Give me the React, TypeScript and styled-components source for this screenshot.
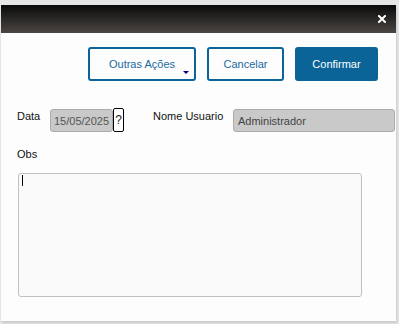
import React from "react";
import styled, { createGlobalStyle } from "styled-components";

const Global = createGlobalStyle`
  html, body { margin: 0; padding: 0; }
  body {
    background: #e6e6e6;
    font-family: "Liberation Sans", Arial, sans-serif;
    font-size: 11px;
    width: 399px;
    height: 324px;
    overflow: hidden;
  }
`;

const Page = styled.div`
  padding: 5px 3px 0 1px;
`;

const Dialog = styled.div`
  width: 395px;
  height: 316px;
  background: #fdfdfd;
  display: flex;
  flex-direction: column;
  box-shadow: 1px 2px 2px rgba(0, 0, 0, 0.12);
  overflow: hidden;
`;

const Header = styled.div`
  height: 28px;
  background: linear-gradient(#0a0a0a, #4b4643);
  display: flex;
  align-items: center;
  justify-content: flex-end;
  padding-right: 9px;
`;

const Close = styled.button`
  border: 0;
  background: transparent;
  padding: 0;
  width: 10px;
  height: 10px;
  display: flex;
  align-items: center;
  justify-content: center;
  cursor: pointer;
`;

const Body = styled.div`
  padding: 14px 0 0 16px;
  display: flex;
  flex-direction: column;
`;

const Toolbar = styled.div`
  display: flex;
  justify-content: flex-end;
  gap: 11px;
  padding-right: 18px;
`;

const Button = styled.button<{ $primary?: boolean; $w: number }>`
  position: relative;
  width: ${(p) => p.$w}px;
  height: 34px;
  box-sizing: border-box;
  border: 2px solid #0b6497;
  border-radius: 3px;
  background: ${(p) => (p.$primary ? "#0b6497" : "#fdfdfd")};
  color: ${(p) => (p.$primary ? "#ffffff" : "#1a6aa0")};
  font-family: "Liberation Sans", Arial, sans-serif;
  font-size: 11px;
  padding: 0;
  cursor: pointer;
`;

const Caret = styled.span`
  position: absolute;
  right: 5px;
  bottom: 5px;
  width: 0;
  height: 0;
  border-left: 3px solid transparent;
  border-right: 3px solid transparent;
  border-top: 3px solid #000080;
`;

const FieldRow = styled.div`
  display: flex;
  align-items: flex-start;
  margin-top: 27px;
`;

const Label = styled.label<{ $w?: number }>`
  width: ${(p) => (p.$w ? `${p.$w}px` : "auto")};
  color: #111;
  font-size: 11px;
  line-height: 12px;
  padding-top: 2px;
  flex-shrink: 0;
`;

const ReadOnly = styled.div<{ $w: number; $pl: number; $color: string }>`
  width: ${(p) => p.$w}px;
  height: 23px;
  box-sizing: border-box;
  margin-top: 1px;
  background: #c9c9c9;
  border: 1px solid #ababab;
  border-radius: 3px;
  color: ${(p) => p.$color};
  font-size: 11px;
  display: flex;
  align-items: center;
  padding-left: ${(p) => p.$pl}px;
  flex-shrink: 0;
  white-space: nowrap;
`;

const Help = styled.span`
  width: 11px;
  height: 24px;
  box-sizing: border-box;
  border: 1px solid #000;
  border-radius: 2px;
  background: #fff;
  color: #2a1616;
  font-size: 12px;
  display: flex;
  align-items: center;
  justify-content: center;
  margin-right: 29px;
  flex-shrink: 0;
`;

const ObsLabel = styled.label`
  display: block;
  margin-top: 16px;
  color: #111;
  font-size: 11px;
  line-height: 12px;
`;

const AreaWrap = styled.div`
  position: relative;
  margin-top: 13px;
  padding-left: 1px;
  width: 344px;
  height: 124px;
`;

const Area = styled.textarea`
  width: 344px;
  height: 124px;
  box-sizing: border-box;
  border: 1px solid #c0c0c0;
  border-radius: 3px;
  background: #fafafa;
  resize: none;
  outline: none;
  font-family: "Liberation Sans", Arial, sans-serif;
  font-size: 11px;
  caret-color: transparent;
  display: block;
`;

const TextCursor = styled.span`
  position: absolute;
  left: 5px;
  top: 2px;
  width: 1px;
  height: 11px;
  background: #000;
`;

export default function App() {
  return (
    <>
      <Global />
      <Page>
        <Dialog>
          <Header>
            <Close aria-label="Fechar">
              <svg width="8" height="8" viewBox="0 0 8 8">
                <path d="M1 1L7 7M7 1L1 7" stroke="#fff" strokeWidth="2" strokeLinecap="square" />
              </svg>
            </Close>
          </Header>
          <Body>
            <Toolbar>
              <Button $w={108}>
                Outras Ações
                <Caret />
              </Button>
              <Button $w={77}>Cancelar</Button>
              <Button $w={83} $primary>
                Confirmar
              </Button>
            </Toolbar>
            <FieldRow>
              <Label $w={33}>Data</Label>
              <ReadOnly $w={63} $pl={3} $color="#555">
                15/05/2025
              </ReadOnly>
              <Help>?</Help>
              <Label $w={80}>Nome Usuario</Label>
              <ReadOnly $w={162} $pl={4} $color="#444">
                Administrador
              </ReadOnly>
            </FieldRow>
            <ObsLabel>Obs</ObsLabel>
            <AreaWrap>
              <Area />
              <TextCursor />
            </AreaWrap>
          </Body>
        </Dialog>
      </Page>
    </>
  );
}
